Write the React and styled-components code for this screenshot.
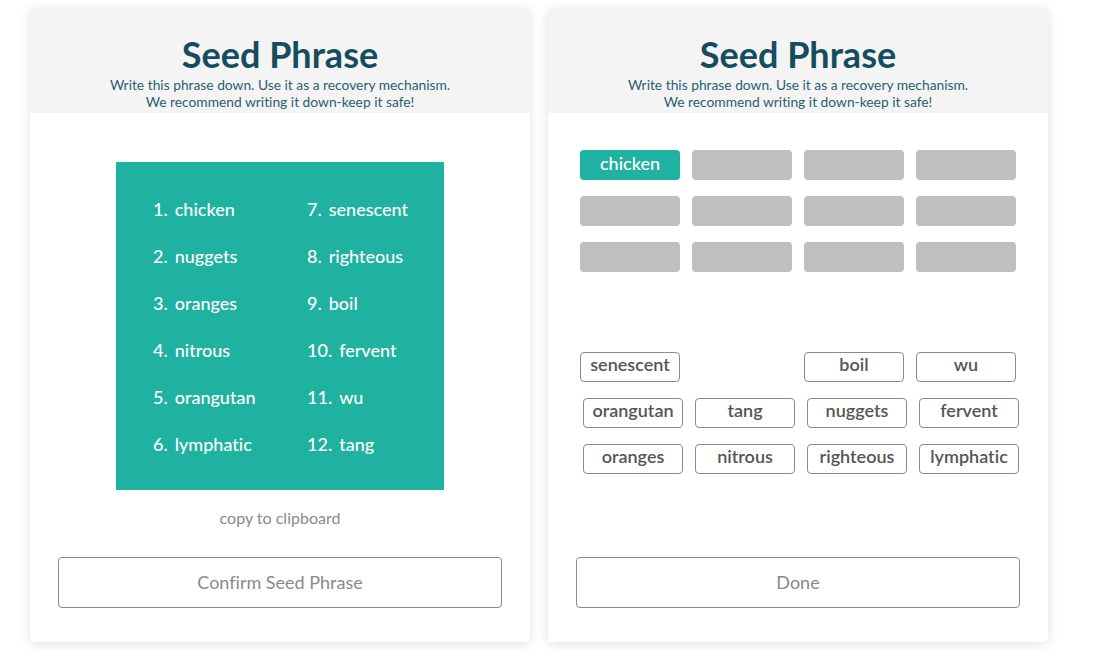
import React from "react";
import styled, { createGlobalStyle } from "styled-components";

const words = [
  "chicken",
  "nuggets",
  "oranges",
  "nitrous",
  "orangutan",
  "lymphatic",
  "senescent",
  "righteous",
  "boil",
  "fervent",
  "wu",
  "tang",
];

// order in which the words show up in the grid (column-major: 1..6 left, 7..12 right)
const gridOrder = [0, 6, 1, 7, 2, 8, 3, 9, 4, 10, 5, 11];

const pool = [
  { shift: 0, items: ["senescent", null, "boil", "wu"] },
  { shift: 3, items: ["orangutan", "tang", "nuggets", "fervent"] },
  { shift: 3, items: ["oranges", "nitrous", "righteous", "lymphatic"] },
];

const chosen = ["chicken"];

const App = () => {
  return (
    <Page>
      <GlobalStyle />
      <Card>
        <Header>
          <Title>Seed Phrase</Title>
          <Sub>
            Write this phrase down. Use it as a recovery mechanism.
            <br />
            We recommend writing it down-keep it safe!
          </Sub>
        </Header>
        <PhraseBox>
          {gridOrder.map((i) => (
            <PhraseItem key={i}>
              <Num>{i + 1}.</Num>
              {words[i]}
            </PhraseItem>
          ))}
        </PhraseBox>
        <Copy>copy to clipboard</Copy>
        <OutlineButton>Confirm Seed Phrase</OutlineButton>
      </Card>

      <Card>
        <Header>
          <Title>Seed Phrase</Title>
          <Sub>
            Write this phrase down. Use it as a recovery mechanism.
            <br />
            We recommend writing it down-keep it safe!
          </Sub>
        </Header>
        <Slots>
          {Array.from({ length: 12 }).map((_, i) => (
            <Slot key={i} $filled={!!chosen[i]}>
              {chosen[i]}
            </Slot>
          ))}
        </Slots>
        <Pool>
          {pool.map((row, r) => (
            <PoolRow key={r} $shift={row.shift}>
              {row.items.map((w, j) =>
                w ? <Word key={j}>{w}</Word> : <Blank key={j} />
              )}
            </PoolRow>
          ))}
        </Pool>
        <OutlineButton>Done</OutlineButton>
      </Card>
    </Page>
  );
};

const GlobalStyle = createGlobalStyle`
  body {
    margin: 0;
    background: #ffffff;
    font-family: Lato, "Open Sans", "Liberation Sans", sans-serif;
    font-variant-ligatures: none;
  }
`;

const Page = styled.div`
  display: flex;
  gap: 18px;
  padding: 8px 30px;
`;

const Card = styled.div`
  width: 500px;
  height: 634px;
  background: #fff;
  border-radius: 4px;
  box-shadow: 0 2px 12px rgba(0, 0, 0, 0.12);
  display: flex;
  flex-direction: column;
  overflow: hidden;
`;

const Header = styled.div`
  background: #f4f4f4;
  padding: 26px 0 3px;
  text-align: center;
`;

const Title = styled.h1`
  margin: 0;
  font-size: 36px;
  line-height: 40px;
  font-weight: 700;
  color: #154d5f;
`;

const Sub = styled.p`
  margin: 2px 0 0;
  font-size: 13.8px;
  line-height: 17px;
  color: #2b5f70;
`;

const PhraseBox = styled.div`
  width: 328px;
  height: 328px;
  box-sizing: border-box;
  margin: 49px auto 0;
  background: #20b2a0;
  display: grid;
  grid-template-columns: 154px 1fr;
  grid-auto-rows: 47px;
  padding: 23px 0 0 37px;
`;

const PhraseItem = styled.div`
  color: #fff;
  font-size: 18px;
  font-weight: 500;
  display: flex;
  align-items: center;
`;

const Num = styled.span`
  margin-right: 7px;
`;

const Copy = styled.div`
  margin-top: 19px;
  text-align: center;
  font-size: 16px;
  line-height: 18px;
  color: #8a8a8a;
`;

const OutlineButton = styled.button`
  margin: auto 28px 34px;
  height: 51px;
  padding: 0 0 2px;
  background: #fff;
  border: 1px solid #8c8c8c;
  border-radius: 4px;
  font-family: inherit;
  font-variant-ligatures: none;
  font-size: 18px;
  color: #8a8a8a;
`;

const Slots = styled.div`
  display: grid;
  grid-template-columns: repeat(4, 100px);
  grid-auto-rows: 30px;
  column-gap: 12px;
  row-gap: 16px;
  margin: 37px 0 0 32px;
`;

const Slot = styled.div`
  border-radius: 4px;
  background: ${(p) => (p.$filled ? "#20b2a0" : "#bfbfbf")};
  color: #fff;
  font-size: 18px;
  font-weight: 500;
  display: flex;
  align-items: center;
  justify-content: center;
  padding-bottom: 5px;
  box-sizing: border-box;
`;

const Pool = styled.div`
  display: flex;
  flex-direction: column;
  gap: 16px;
  margin: 80px 0 0 32px;
`;

const PoolRow = styled.div`
  display: grid;
  grid-template-columns: repeat(4, 100px);
  column-gap: 12px;
  padding-left: ${(p) => p.$shift}px;
`;

const Word = styled.div`
  height: 30px;
  box-sizing: border-box;
  border: 1px solid #8c8c8c;
  border-radius: 4px;
  color: #555;
  font-size: 18px;
  font-weight: 600;
  display: flex;
  align-items: center;
  justify-content: center;
  padding-bottom: 6px;
`;

const Blank = styled.div``;

export default App;
